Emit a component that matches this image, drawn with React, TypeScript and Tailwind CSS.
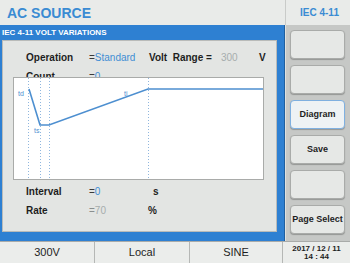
import React from 'react'

const buttons = ['', '', 'Diagram', 'Save', '', 'Page Select']

function Chart() {
  return (
    <div className="ml-[10px] w-[251px] h-[103px] bg-white border border-[#a9aba9] relative">
      <svg width="251" height="103" className="absolute left-[-1px] top-[-1px]">
        {[15, 27, 36, 135].map((x) => (
          <line key={x} x1={x + 0.5} y1={1} x2={x + 0.5} y2={102} stroke="#8fb6de" strokeWidth="1" strokeDasharray="1 2" />
        ))}
        <polyline
          points="16,12 27,48 36,48 135,12 250,12"
          fill="none"
          stroke="#4d8fd0"
          strokeWidth="1.6"
        />
        <text x="5" y="19" fontSize="7" fill="#4d8fd0" fontFamily="Liberation Sans, sans-serif">td</text>
        <text x="21" y="56" fontSize="7" fill="#4d8fd0" fontFamily="Liberation Sans, sans-serif">ts</text>
        <text x="111" y="19" fontSize="7" fill="#4d8fd0" fontFamily="Liberation Sans, sans-serif">ti</text>
      </svg>
    </div>
  )
}

export default function App() {
  return (
    <div className="w-[350px] h-[263px] flex flex-col bg-[#e9ebe9] font-['Liberation_Sans',Arial,sans-serif] overflow-hidden">
      {/* Header */}
      <div className="h-[25px] flex">
        <div className="w-[285px] flex items-center pl-[7px] bg-[#e9ebe9]">
          <span className="text-[14px] font-bold text-[#3a8bd3] leading-none">AC SOURCE</span>
        </div>
        <div className="w-[65px] flex items-center justify-center border-l border-[#c9cbc9] bg-[#e9ebe9]">
          <span className="text-[10px] font-bold text-[#3a8bd3] pl-[3px]">IEC 4-11</span>
        </div>
      </div>

      {/* Main */}
      <div className="h-[216px] flex">
        <div className="w-[285px] bg-[#2e80d2] flex flex-col pl-[2px] pr-[7px] pb-[9px] border-r border-[#1f5f9f]">
          <div className="h-[15px] flex items-center">
            <span className="text-[8px] font-bold text-white leading-none">IEC 4-11 VOLT VARIATIONS</span>
          </div>
          <div className="flex-1 bg-[#e3e5e3] border border-[#b9bbb9] flex flex-col pt-[11px] text-[10px] leading-[12px] text-[#1e1e1e]">
            <div className="flex">
              <span className="w-[86px] pl-[23px] font-bold">Operation</span>
              <span className="w-[60px] text-[#3a3a3a]">=<span className="text-[#3f8ed4]">Standard</span></span>
              <span className="w-[72px] font-bold">Volt&nbsp; Range =</span>
              <span className="w-[38px] text-[#a6adad]">300</span>
              <span className="font-bold">V</span>
            </div>
            {/* row partly covered by the chart */}
            <div className="mt-[7px] h-[6px] overflow-hidden flex">
              <span className="w-[86px] pl-[23px] font-bold">Count</span>
              <span className="text-[#3a3a3a]">=<span className="text-[#3f8ed4]">0</span></span>
            </div>
            <Chart />
            <div className="flex mt-[6px]">
              <span className="w-[86px] pl-[23px] font-bold">Interval</span>
              <span className="w-[64px] text-[#3a3a3a]">=<span className="text-[#3f8ed4]">0</span></span>
              <span className="font-bold">s</span>
            </div>
            <div className="flex mt-[7px]">
              <span className="w-[86px] pl-[23px] font-bold">Rate</span>
              <span className="w-[59px] text-[#8a8f8f]">=<span className="text-[#a6adad]">70</span></span>
              <span className="font-bold">%</span>
            </div>
          </div>
        </div>
        <div className="w-[65px] bg-[#c6c8c6] border-l border-[#dfe1df] flex flex-col gap-[6px] pt-[5px] pl-[4px] pr-[5px]">
          {buttons.map((b, i) => (
            <div
              key={i}
              className={`h-[29px] rounded-[4px] flex items-center justify-center text-[9px] font-bold text-[#1e1e1e] shadow-[0_1px_1px_rgba(0,0,0,0.25)] ${
                b === 'Diagram'
                  ? 'bg-[#eef2f4] border border-[#7fb0e0]'
                  : 'bg-[#e6e8e6] border border-[#a9aba9]'
              }`}
            >
              {b}
            </div>
          ))}
        </div>
      </div>

      {/* Status bar */}
      <div className="flex-1 flex border-t border-[#a9aba9] bg-[#ebedeb] text-[11px] text-[#1e1e1e]">
        <div className="w-[95px] flex items-center justify-center border-r border-[#b5b7b5]">300V</div>
        <div className="w-[95px] flex items-center justify-center border-r border-[#b5b7b5]">Local</div>
        <div className="w-[93px] flex items-center justify-center border-r border-[#b5b7b5]">SINE</div>
        <div className="flex-1 flex flex-col items-center justify-center text-[8px] font-bold leading-[8px]">
          <span>2017 / 12 / 11</span>
          <span>14 : 44</span>
        </div>
      </div>
    </div>
  )
}
